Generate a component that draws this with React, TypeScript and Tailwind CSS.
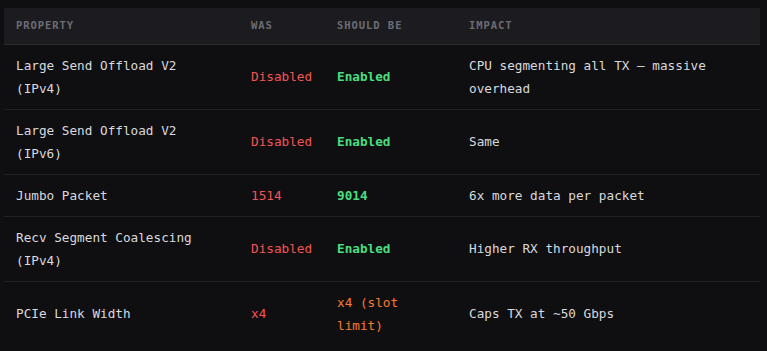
const rows = [
  {
    prop: "Large Send Offload V2 (IPv4)",
    was: "Disabled",
    should: "Enabled",
    shouldTone: "green",
    impact: "CPU segmenting all TX — massive overhead",
  },
  {
    prop: "Large Send Offload V2 (IPv6)",
    was: "Disabled",
    should: "Enabled",
    shouldTone: "green",
    impact: "Same",
  },
  {
    prop: "Jumbo Packet",
    was: "1514",
    should: "9014",
    shouldTone: "green",
    impact: "6x more data per packet",
  },
  {
    prop: "Recv Segment Coalescing (IPv4)",
    was: "Disabled",
    should: "Enabled",
    shouldTone: "green",
    impact: "Higher RX throughput",
  },
  {
    prop: "PCIe Link Width",
    was: "x4",
    should: "x4 (slot limit)",
    shouldTone: "orange",
    impact: "Caps TX at ~50 Gbps",
  },
];

export default function App() {
  return (
    <div
      className="min-h-screen w-full bg-[#0f0f11] pt-2 pl-1 pr-[7px]"
      style={{ fontFamily: '"DejaVu Sans Mono", "Liberation Mono", monospace' }}
    >
      <table className="w-full table-fixed border-collapse text-left">
        <colgroup>
          <col className="w-[235px]" />
          <col className="w-[86px]" />
          <col className="w-[132px]" />
          <col />
        </colgroup>
        <thead>
          <tr className="bg-[#1c1c20] border-b border-[#2a2a2f]">
            {["Property", "Was", "Should be", "Impact"].map((h) => (
              <th
                key={h}
                className="h-[36px] px-3 py-0 text-[10.5px] font-semibold uppercase tracking-[0.09em] text-[#6c6c75]"
              >
                {h}
              </th>
            ))}
          </tr>
        </thead>
        <tbody>
          {rows.map((r, i) => (
            <tr
              key={i}
              className={i < rows.length - 1 ? "border-b border-[#222226]" : ""}
            >
              <td className="px-3 py-[9px] text-[12.7px] leading-[23px] text-[#d9d9de] align-middle">
                {r.prop}
              </td>
              <td className="px-3 py-[9px] text-[12.7px] leading-[23px] text-[#f25555] align-middle">
                {r.was}
              </td>
              <td
                className={
                  r.shouldTone === "green"
                    ? "px-3 py-[9px] text-[12.7px] leading-[23px] font-bold text-[#4ade80] align-middle"
                    : "px-3 py-[9px] text-[12.7px] leading-[23px] text-[#f97b2e] align-middle"
                }
              >
                {r.should}
              </td>
              <td className="px-3 py-[9px] text-[12.7px] leading-[23px] text-[#d9d9de] align-middle">
                {r.impact}
              </td>
            </tr>
          ))}
        </tbody>
      </table>
    </div>
  );
}
